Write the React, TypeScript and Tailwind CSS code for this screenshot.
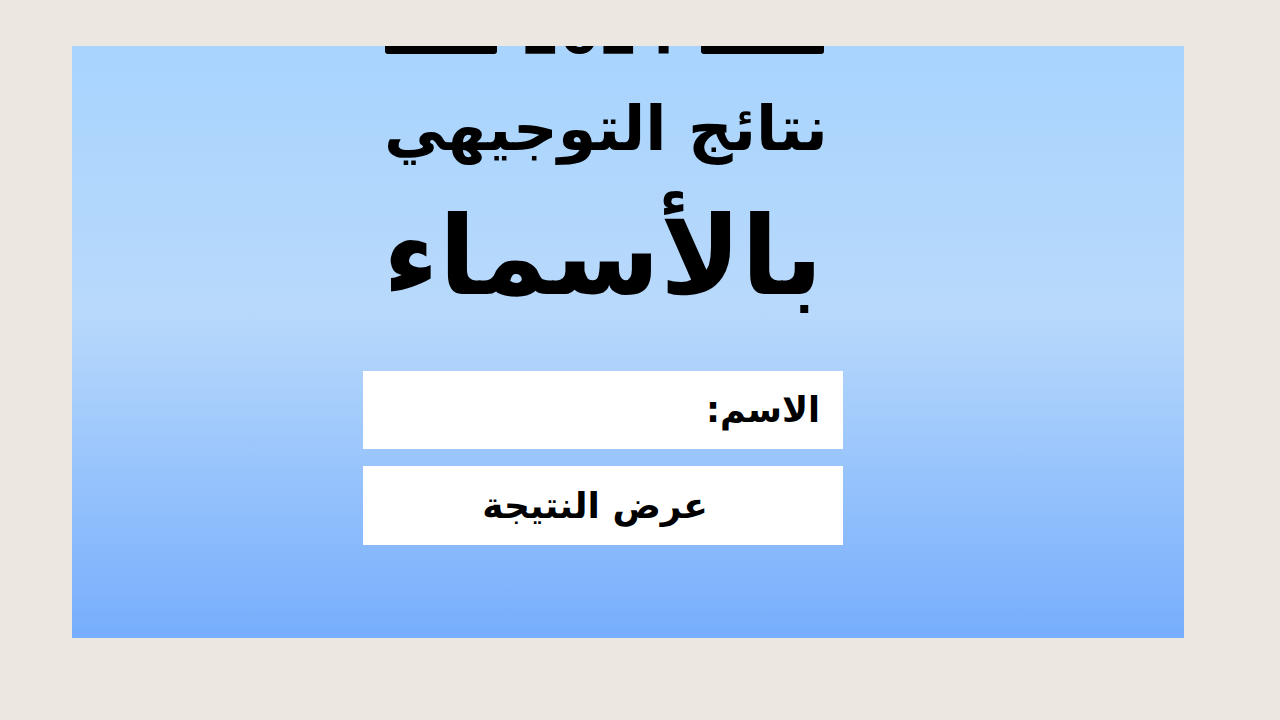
import React from 'react';

const arabic = { fontFamily: '"DejaVu Sans", "Noto Sans", sans-serif' };

export default function App() {
  return (
    <div className="min-h-screen w-full bg-[#ece8e1] pt-[46px]" dir="ltr">
      <div className="ml-[72px] h-[592px] w-[1112px] overflow-hidden bg-gradient-to-b from-[#a8d4fe] via-[#b8d9fb] via-45% to-[#76adfc]">
        <div className="ml-[291px] flex w-[480px] flex-col items-center" style={arabic}>
          {/* year line, cut off by the top edge */}
          <div className="-mt-[40px] flex h-[48px] w-[442px] items-end justify-between pl-[3px]">
            <div className="h-[10px] w-[112px] rounded-[3px] bg-black" />
            <div className="-mb-[8px] text-[56px] font-bold leading-none text-black">2024</div>
            <div className="h-[10px] w-[123px] rounded-[3px] bg-black" />
          </div>
          <h1 dir="rtl" className="mt-[35px] pl-[6px] text-[62px] font-bold leading-[80px] text-black">
            نتائج التوجيهي
          </h1>
          <h2 dir="rtl" className="mt-[24px] text-[109px] font-bold leading-[128px] text-black">
            بالأسماء
          </h2>
          <div className="mt-[50px] flex h-[78px] w-[480px] items-center justify-start bg-white px-[23px]" dir="rtl">
            <span className="text-[35px] font-bold text-black">الاسم:</span>
          </div>
          <button className="mt-[17px] flex h-[79px] w-[480px] items-center justify-center bg-white pr-[16px] text-[36px] font-bold text-black" dir="rtl">
            عرض النتيجة
          </button>
        </div>
      </div>
    </div>
  );
}
